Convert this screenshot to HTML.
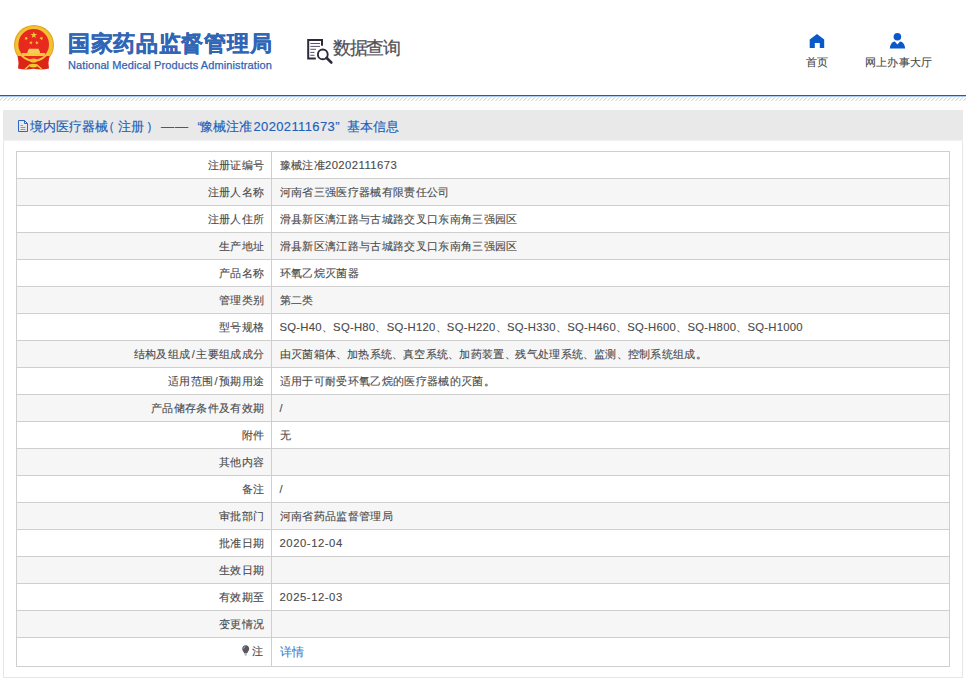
<!DOCTYPE html>
<html><head><meta charset="utf-8">
<style>
*{margin:0;padding:0;box-sizing:border-box}
html,body{width:966px;height:695px;overflow:hidden;background:#fff;font-family:"Liberation Sans",sans-serif;color:#333}
.a{position:absolute;white-space:nowrap}
#bline{position:absolute;left:0;top:95px;width:966px;height:1px;background:#0c63c8;box-shadow:0 0.5px 0 #5b97dc}
#t1{left:68px;top:30px;font-size:22px;line-height:28px;font-weight:bold;color:#3165b5;letter-spacing:0.7px;-webkit-text-stroke:0.35px #3165b5}
#t2{left:68px;top:58px;font-size:11px;line-height:14px;color:#2f63b3;letter-spacing:0.1px;-webkit-text-stroke:0.25px #2f63b3}
#q{left:333px;top:36px;font-size:18px;line-height:24px;color:#505058;letter-spacing:-1.5px;font-weight:500;-webkit-text-stroke:0.25px #505058}
.nav{top:54px;font-size:11.2px;line-height:16px;color:#444;letter-spacing:0.35px;-webkit-text-stroke:0.12px #555}
#panel{position:absolute;left:3px;top:110px;width:960px;height:568px;border:1px solid #e6e6e6;border-top:0;background:#fff}
#ptitle{position:absolute;left:-1px;top:0;width:960px;height:31px;background:#e9e9e9;border-bottom:1px solid #f1f2f5}
.pt{top:10px;font-size:13px;line-height:14px;color:#215fb8;-webkit-text-stroke:0.15px #215fb8}
table{position:absolute;left:12px;top:41px;width:934px;border-collapse:collapse;font-size:11px;letter-spacing:0.35px;table-layout:fixed}
td{height:27px;border:1px solid #cfcfcf;padding:0 8px 0 7.5px;white-space:nowrap;line-height:14px;color:#3a3a3a}
td.l{width:255px;text-align:right;padding-right:6.5px}
tr:nth-child(even) td{background:#f6f6f6}
tr.last td{height:29px}
a{color:#3a8cf0;text-decoration:none;font-size:12px;letter-spacing:0}
.d{letter-spacing:0.3px}
.d0{font-size:11.3px;letter-spacing:0.45px}
.sl{letter-spacing:1.6px;padding-left:1.2px}
.dn{letter-spacing:-0.3px}
.dt{font-size:11.3px;letter-spacing:0.55px}
.sq{font-size:11.3px;letter-spacing:0.24px}
td{color:#484848;-webkit-text-stroke:0.12px #555}
</style></head><body>
<svg class="a" style="left:12px;top:24px" width="46" height="48" viewBox="12 24 46 48">
  <circle cx="34" cy="45" r="20" fill="#dfa420"/>
  <circle cx="34" cy="45" r="19" fill="#f2c030"/>
  <path d="M17.6 56 Q19.2 63 18 68.6 Q26 70.2 33.5 68.8 Q41 70.2 49 68.6 Q47.8 63 49.4 56 Z" fill="#dc2419"/>
  <circle cx="33.7" cy="44.6" r="17.2" fill="#f3c433"/>
  <circle cx="33.7" cy="44.4" r="15.3" fill="#e8291f"/>
  <path d="M33.80 31.40 L34.61 33.89 L37.22 33.89 L35.11 35.42 L35.92 37.91 L33.80 36.38 L31.68 37.91 L32.49 35.42 L30.38 33.89 L32.99 33.89 Z" fill="#f7c93a"/>
  <path d="M27.25 36.58 L26.97 38.06 L28.25 38.84 L26.76 39.02 L26.42 40.49 L25.78 39.13 L24.28 39.25 L25.38 38.23 L24.79 36.84 L26.11 37.56 Z" fill="#f7c93a"/>
  <path d="M40.35 36.58 L41.49 37.56 L42.81 36.84 L42.22 38.23 L43.32 39.25 L41.82 39.13 L41.18 40.49 L40.84 39.02 L39.35 38.84 L40.63 38.06 Z" fill="#f7c93a"/>
  <path d="M31.42 40.87 L31.52 42.30 L32.90 42.70 L31.57 43.24 L31.62 44.67 L30.69 43.57 L29.35 44.06 L30.10 42.84 L29.22 41.71 L30.61 42.05 Z" fill="#f7c93a"/>
  <path d="M36.38 40.87 L37.19 42.05 L38.58 41.71 L37.70 42.84 L38.45 44.06 L37.11 43.57 L36.18 44.67 L36.23 43.24 L34.90 42.70 L36.28 42.30 Z" fill="#f7c93a"/>
  <path d="M27.3 52.9 Q27.8 50.5 28.6 49.6 L29 48.8 H38.4 L38.8 49.6 Q39.6 50.5 40.1 52.9 Z" fill="#f5cf55"/>
  <path d="M21.9 53 H45.1 L44.6 56 H22.4 Z" fill="#f6cb3a"/>
  <ellipse cx="33.5" cy="60.4" rx="3.6" ry="2" fill="#f6c733"/>
  <ellipse cx="33.4" cy="65.6" rx="4" ry="1.9" fill="#f6c733"/>
  <path d="M30.5 64.5 L25.2 69 M36.3 64.5 L41.6 69" stroke="#f6c733" stroke-width="1.6"/>
</svg>
<div id="t1" class="a">国家药品监督管理局</div>
<div id="t2" class="a">National Medical Products Administration</div>
<svg class="a" style="left:305px;top:37px" width="30" height="28" viewBox="305 37 30 28">
  <path d="M315.8 58.6 H308.2 V39.9 H322 V45.8" fill="none" stroke="#2b2b3b" stroke-width="2"/>
  <path d="M310.3 43.5 H320 M310.3 46.4 H320 M310.3 49.3 H316 M310.3 52.4 H314.5 M310.3 55.3 H314.5" stroke="#55556a" stroke-width="1"/>
  <circle cx="322.8" cy="54.4" r="4.9" fill="none" stroke="#2b2b3b" stroke-width="1.9"/>
  <path d="M326.5 57.8 L331.3 62.5" stroke="#2b2b3b" stroke-width="2.6" stroke-linecap="round"/>
</svg>
<div id="q" class="a">数据查询</div>
<svg class="a" style="left:808px;top:32px" width="18" height="18" viewBox="808 32 18 18"><path d="M817 34 L824.2 39.6 V48 H819.8 V43 H814.8 V48 H809.7 V39.6 Z" fill="#0b59c9"/></svg>
<div class="nav a" style="left:805.5px">首页</div>
<svg class="a" style="left:888px;top:31px" width="19" height="19" viewBox="888 31 19 19"><circle cx="897.4" cy="36.7" r="3.8" fill="#0b59c9"/><path d="M889.8 48.6 Q890.5 41.6 894.8 41.4 L897.4 44.6 L900 41.4 Q904.5 41.6 905.1 48.6 Z" fill="#0b59c9"/></svg>
<div class="nav a" style="left:864.5px">网上办事大厅</div>
<div id="bline"></div>
<svg class="a" style="left:0;top:97px" width="966" height="4" shape-rendering="crispEdges"><defs><pattern id="sp" x="3" width="4" height="4" patternUnits="userSpaceOnUse"><rect x="3" y="0" width="1" height="1" fill="#e2e2e2"/><rect x="0" y="0" width="1" height="1" fill="#f0f0f0"/><rect x="2" y="1" width="1" height="1" fill="#d8d8d8"/><rect x="3" y="1" width="1" height="1" fill="#efefef"/><rect x="1" y="2" width="1" height="1" fill="#d8d8d8"/><rect x="2" y="2" width="1" height="1" fill="#efefef"/><rect x="0" y="3" width="1" height="1" fill="#dedede"/><rect x="1" y="3" width="1" height="1" fill="#f0f0f0"/></pattern></defs><rect x="0" y="0" width="966" height="4" fill="url(#sp)"/></svg>
<div id="panel">
 <div id="ptitle"></div>
 <svg class="a" style="left:14px;top:9px" width="12" height="14" viewBox="0 0 12 14"><path d="M0.5 1.5 H6.5 L9.5 4.5 V12.5 H0.5 Z" fill="none" stroke="#2f66c4" stroke-width="1"/><path d="M6.5 1.5 V4.5 H9.5" fill="none" stroke="#2f66c4" stroke-width="1"/><path d="M2.5 6.5 H5 M2.5 8.5 H7.5 M2.5 10.5 H7.5" stroke="#7d9ad6" stroke-width="1"/></svg>
 <span id="p1" class="a pt" style="left:25.7px">境内医疗器械</span><span id="p2" class="a pt" style="left:98px">（</span><span id="p3" class="a pt" style="left:113.6px">注册</span><span id="p4" class="a pt" style="left:141.8px">）</span><span id="p5" class="a pt" style="letter-spacing:1px;left:156.9px">——</span><span id="p6" class="a pt" style="left:193.5px">“</span><span id="p7" class="a pt" style="left:196.2px">豫械注准</span><span id="p8" class="a pt" style="letter-spacing:0.36px;left:249.5px">20202111673</span><span id="p9" class="a pt" style="left:331.2px">”</span><span id="p10" class="a pt" style="left:342.6px">基本信息</span>
 <table>
  <tr><td class="l">注册证编号</td><td>豫械注准<span class="d0">20202111673</span></td></tr>
  <tr><td class="l">注册人名称</td><td>河南省三强医疗器械有限责任公司</td></tr>
  <tr><td class="l">注册人住所</td><td>滑县新区漓江路与古城路交叉口东南角三强园区</td></tr>
  <tr><td class="l">生产地址</td><td>滑县新区漓江路与古城路交叉口东南角三强园区</td></tr>
  <tr><td class="l">产品名称</td><td>环氧乙烷灭菌器</td></tr>
  <tr><td class="l">管理类别</td><td>第二类</td></tr>
  <tr><td class="l">型号规格</td><td><span class="sq">SQ-H40</span>、<span class="sq">SQ-H80</span>、<span class="sq">SQ-H120</span>、<span class="sq">SQ-H220</span>、<span class="sq">SQ-H330</span>、<span class="sq">SQ-H460</span>、<span class="sq">SQ-H600</span>、<span class="sq">SQ-H800</span>、<span class="sq">SQ-H1000</span></td></tr>
  <tr><td class="l">结构及组成<span class="sl">/</span>主要组成成分</td><td>由灭菌箱体<span class="dn">、</span>加热系统<span class="dn">、</span>真空系统<span class="dn">、</span>加药装置<span class="dn">、</span>残气处理系统<span class="dn">、</span>监测<span class="dn">、</span>控制系统组成。</td></tr>
  <tr><td class="l">适用范围<span class="sl">/</span>预期用途</td><td>适用于可耐受环氧乙烷的医疗器械的灭菌。</td></tr>
  <tr><td class="l">产品储存条件及有效期</td><td>/</td></tr>
  <tr><td class="l">附件</td><td>无</td></tr>
  <tr><td class="l">其他内容</td><td></td></tr>
  <tr><td class="l">备注</td><td>/</td></tr>
  <tr><td class="l">审批部门</td><td>河南省药品监督管理局</td></tr>
  <tr><td class="l">批准日期</td><td><span class="dt">2020-12-04</span></td></tr>
  <tr><td class="l">生效日期</td><td></td></tr>
  <tr><td class="l">有效期至</td><td><span class="dt">2025-12-03</span></td></tr>
  <tr><td class="l">变更情况</td><td></td></tr>
  <tr class="last"><td class="l" style="padding-right:7.5px;padding-bottom:1.5px"><svg width="8" height="11" viewBox="0 0 8 11" style="vertical-align:-1px;margin-right:2.5px"><path d="M3.7 0.3 C1.6 0.3 0.2 1.9 0.2 3.8 C0.2 5.6 1.5 6.4 2.2 8.2 H5.2 C5.9 6.4 7.2 5.6 7.2 3.8 C7.2 1.9 5.8 0.3 3.7 0.3 Z" fill="#58585e"/><path d="M2.4 8.6 H5 V9.4 H2.4 Z M2.8 9.8 H4.6 V10.6 H2.8 Z" fill="#9a9aa4"/><path d="M1.6 3.6 Q1.8 2 3.2 1.6" stroke="#c8cde0" stroke-width="0.8" fill="none"/></svg>注</td><td><a>详情</a></td></tr>
 </table>
</div>
</body></html>
